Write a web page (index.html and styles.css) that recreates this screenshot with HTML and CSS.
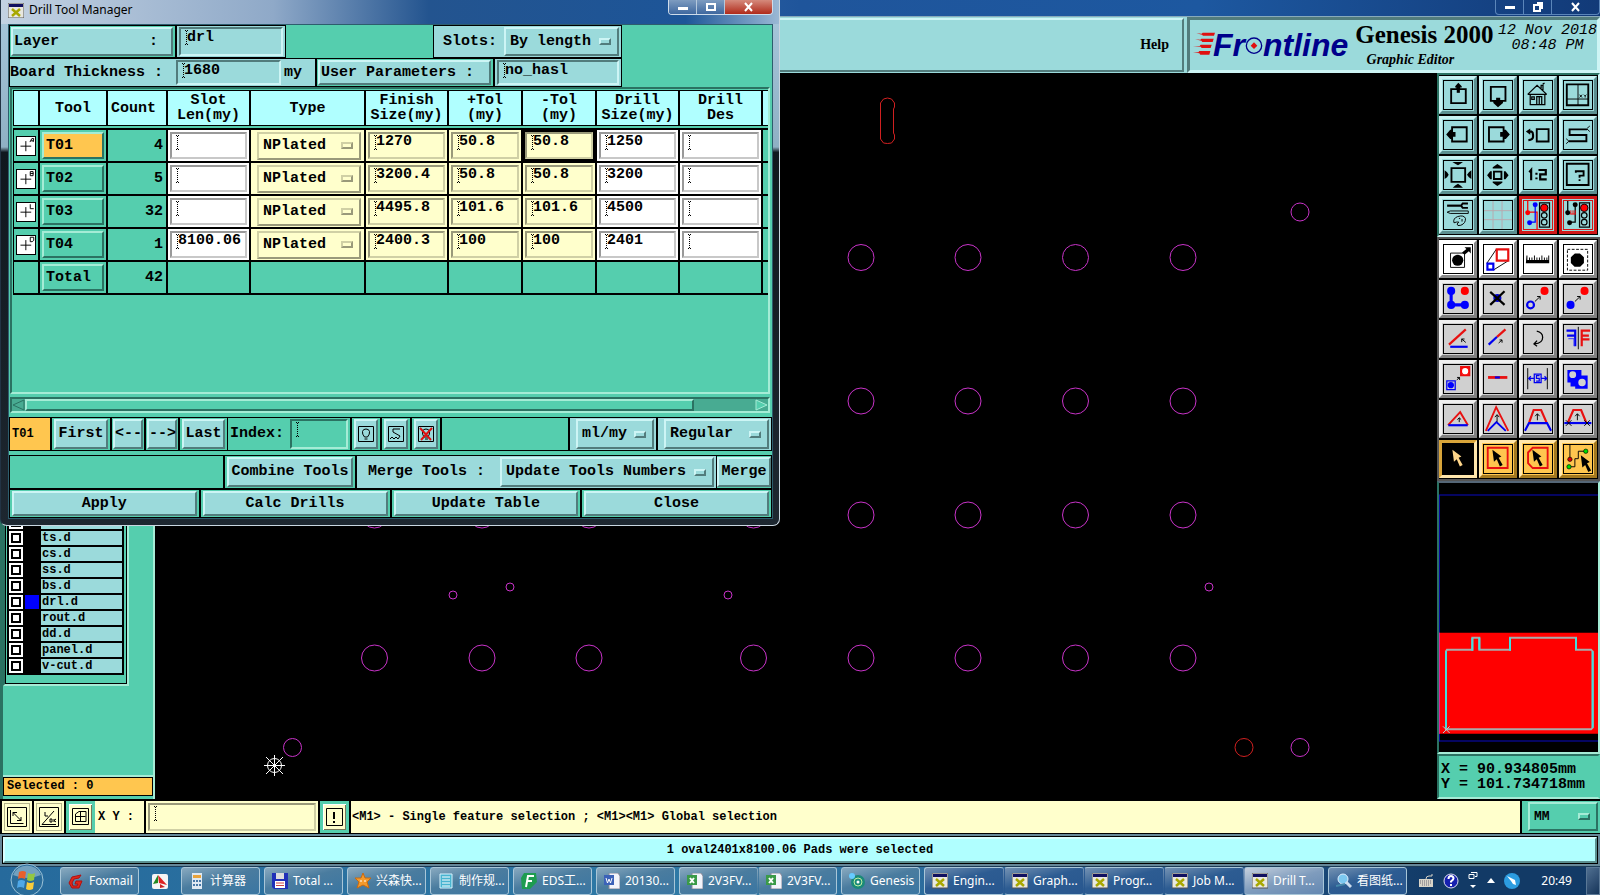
FILE: index.html
```html
<!DOCTYPE html>
<html lang="en">
<head>
<meta charset="utf-8">
<title>Genesis 2000 - Graphic Editor</title>
<link rel="stylesheet" href="styles.css">
</head>
<body>
<svg class="defs" aria-hidden="true">
  <defs>
    <path id="pointer" d="M27 15 L56 37 L47 41 L60 64 L51 69 L41 46 L32 54 Z"/>
    <g id="xwin"><rect width="16" height="15" fill="#e8e8e0" stroke="#555"/><rect x="1" y="1" width="14" height="3" fill="#101060"/><path d="M4 6 L12 13 M12 6 L4 13" stroke="#a8a800" stroke-width="2.5"/></g>
  </defs>
</svg>

<div class="titlebar">
  <div class="winbtns plain">
    <button aria-label="Minimize"><svg width="12" height="10"><rect x="1" y="4" width="10" height="3" fill="#fff"/></svg></button>
    <button aria-label="Restore"><svg width="12" height="10"><path d="M2 3h6v6h-6z M5 1h5v6" fill="none" stroke="#fff" stroke-width="2"/></svg></button>
    <button class="wide" aria-label="Close"><svg width="12" height="10"><path d="M2 1l7 8M9 1l-7 8" stroke="#fff" stroke-width="2"/></svg></button>
  </div>
</div>

<header class="header">
  <nav class="menubar"><button class="help">Help</button></nav>
  <div class="brand">
    <div class="logo">
      <svg class="streaks" width="22" height="26" viewBox="0 0 66 78"><g fill="#e01010"><path d="M10 4l16 1l3-3h37l-3 9H30l-3-3z"/><path d="M6 22l16 1l3-3h37l-3 10H28l-3-4z"/><path d="M0 42l20 0l3-4h33l-3 10H26l-3-4z"/><path d="M0 61l16 0l3-4h33l-3 11H22l-3-4z"/></g></svg>
      <span>Fr</span><svg class="dot" width="18" height="20" viewBox="0 0 54 60"><circle cx="27" cy="32" r="23" fill="none" stroke="#00008b" stroke-width="4"/><path d="M27 22l10 10-10 10-10-10z" fill="#e01010"/></svg><span>ntline</span>
    </div>
    <div class="product"><strong>Genesis 2000</strong><em>Graphic Editor</em></div>
    <div class="clock">12 Nov 2018<br>08:48 PM</div>
  </div>
</header>

<main class="main">
  <aside class="layers">
    <div class="layerbox">
      <ul class="layerlist">
        <li><input type="checkbox" aria-label="layer"><i></i><span></span></li>
        <li><input type="checkbox" id="l1"><i></i><label for="l1">ts.d</label></li>
        <li><input type="checkbox" id="l2"><i></i><label for="l2">cs.d</label></li>
        <li><input type="checkbox" id="l3"><i></i><label for="l3">ss.d</label></li>
        <li><input type="checkbox" id="l4"><i></i><label for="l4">bs.d</label></li>
        <li><input type="checkbox" id="l5"><i class="blue"></i><label for="l5">drl.d</label></li>
        <li><input type="checkbox" id="l6"><i></i><label for="l6">rout.d</label></li>
        <li><input type="checkbox" id="l7"><i></i><label for="l7">dd.d</label></li>
        <li><input type="checkbox" id="l8"><i></i><label for="l8">panel.d</label></li>
        <li><input type="checkbox" id="l9"><i></i><label for="l9">v-cut.d</label></li>
      </ul>
    </div>
    <div class="selected">Selected : 0</div>
  </aside>

  <div class="canvas">
    <svg viewBox="155 73 1282 726" preserveAspectRatio="xMinYMin slice" fill="none" stroke="#c833c8">
      <g>
        <circle cx="861" cy="257.500" r="13"/><circle cx="968" cy="257.500" r="13"/><circle cx="1075.500" cy="257.500" r="13"/><circle cx="1183" cy="257.500" r="13"/>
        <circle cx="861" cy="401" r="13"/><circle cx="968" cy="401" r="13"/><circle cx="1075.500" cy="401" r="13"/><circle cx="1183" cy="401" r="13"/>
        <circle cx="374.500" cy="515" r="13"/><circle cx="482" cy="515" r="13"/><circle cx="589" cy="515" r="13"/><circle cx="753.500" cy="515" r="13"/>
        <circle cx="861" cy="515" r="13"/><circle cx="968" cy="515" r="13"/><circle cx="1075.500" cy="515" r="13"/><circle cx="1183" cy="515" r="13"/>
        <circle cx="374.500" cy="658" r="13"/><circle cx="482" cy="658" r="13"/><circle cx="589" cy="658" r="13"/><circle cx="753.500" cy="658" r="13"/>
        <circle cx="861" cy="658" r="13"/><circle cx="968" cy="658" r="13"/><circle cx="1075.500" cy="658" r="13"/><circle cx="1183" cy="658" r="13"/>
        <circle cx="453" cy="595" r="4"/><circle cx="510" cy="587" r="4"/><circle cx="728" cy="595" r="4"/><circle cx="1209" cy="587" r="4"/>
        <circle cx="1300" cy="212" r="9"/><circle cx="1300" cy="747.500" r="9"/><circle cx="292.500" cy="747.500" r="9"/>
      </g>
      <g stroke="#d02020"><circle cx="1244" cy="747.500" r="9"/><path d="M880.5 103l3-4q4-2 8 0l3 4v4l-1 2v24l1 2v4l-3 4q-4 1-8 0l-3-4z"/></g>
      <g stroke="#fff"><circle cx="274.500" cy="765.500" r="7"/><path d="M264 765.500h21M274.500 755v21M266 757l17 17M283 757l-17 17"/></g>
    </svg>
  </div>

  <aside class="tools">
    <div class="toolbox">
      <button class="t" aria-label="Pan up"><svg viewBox="0 0 90 90"><path class="k5" d="M23 26H70V71H23Z"/><path d="M46 6L36 17V21H40V26H36V28H56V26H52V21H57V17Z"/><path d="M41 18h10v20h-10z"/></svg></button>
      <button class="t" aria-label="Pan down"><svg viewBox="0 0 90 90"><path class="k5" d="M22 19H69V64H22Z"/><path d="M45 84L30 71V64H39V54H52V64H61V71Z"/></svg></button>
      <button class="t" aria-label="Home"><svg viewBox="0 0 90 90"><path class="k4" d="M12 43L42 14L73 43M20 43V76H67V43M12 43H73M41 76V50H57V76M49 50V76M25 51H33V59H25ZM55 24V14H61V30M60 10l6-3"/></svg></button>
      <button class="t" aria-label="Zoom window"><svg viewBox="0 0 90 90"><path class="k5" d="M9 11H78V78H9Z"/><path class="k3" d="M45 11V78M9 58H78M50 44l8 9M58 44l-8 9M64 44l4 4l4-4M68 48v5"/></svg></button>

      <button class="t" aria-label="Pan left"><svg viewBox="0 0 90 90"><path class="k5" d="M26 20H73V66H26Z"/><path d="M7 43L20 28H28V35H37V51H28V58H20Z"/></svg></button>
      <button class="t" aria-label="Pan right"><svg viewBox="0 0 90 90"><path class="k5" d="M16 20H63V66H16Z"/><path d="M83 43L70 28H62V35H52V51H62V58H70Z"/></svg></button>
      <button class="t" aria-label="Previous view"><svg viewBox="0 0 90 90"><path class="k5" d="M41 26H79V66H41Z"/><path class="k6" d="M14 34H24Q29 36 29 44V52Q28 60 14 62"/><path d="M6 34L20 24V44Z"/></svg></button>
      <button class="t" aria-label="Snake"><svg viewBox="0 0 90 90"><path class="k5" d="M74 27H18V45H72V65H16"/><path class="k3" d="M74 24l9-8M74 26l9 8M16 65l-9-8M16 65l-9 8"/></svg></button>

      <button class="t" aria-label="Zoom in"><svg viewBox="0 0 90 90"><path class="k5" d="M24 23H68V67H24Z"/><path d="M27 3H61L53 9L45 14L36 9ZM28 86H61L53 79L45 73L36 79ZM2 30V58L10 52L15 44L10 36ZM88 30V58L80 52L74 44L80 36Z"/></svg></button>
      <button class="t" aria-label="Zoom out"><svg viewBox="0 0 90 90"><path class="k5" d="M32 34H56V58H32Z"/><path d="M43 10L28 20V24H59V20ZM43 80L28 70V66H59V70ZM10 46L20 33H25V59H20ZM79 46L69 33H64V59H69Z"/></svg></button>
      <button class="t" aria-label="Scale one to two"><svg viewBox="0 0 90 90"><path class="k6" d="M17 36L23 29V62M40 38V44M40 53V59M50 32V29H70V43H52V59H73"/></svg></button>
      <button class="t" aria-label="Query"><svg viewBox="0 0 90 90"><path class="k5" d="M9 9H79V77H9Z"/><path class="k5" d="M38 38V33H63V47H50V54M50 59V64"/></svg></button>

      <button class="t" aria-label="Settings"><svg viewBox="0 0 90 90"><path class="k6" d="M10 15H54"/><path class="k5" d="M77 8H60L55 15L60 22H77"/><path class="k3" d="M10 36L20 32H78V40H20ZM32 70Q28 56 44 50Q64 44 69 56Q70 72 54 78Q42 82 42 74L48 68Q42 66 32 70ZM48 56h4M58 58v8"/></svg></button>
      <button class="t" aria-label="Grid"><svg viewBox="0 0 90 90"><path d="M29 0V90M58 0V90M0 31H90M0 60H90" fill="none" stroke="#b9a7ac" stroke-width="3"/></svg></button>
      <button class="t red" aria-label="Online check"><svg viewBox="0 0 90 90"><path d="M12 0V36H42V90" fill="none" stroke="#f00" stroke-width="4"/><path d="M36 10V68H18" fill="none" stroke="#00f" stroke-width="4"/><circle cx="12" cy="38" r="8" fill="#f00"/><circle cx="36" cy="12" r="8" fill="#00f"/><circle cx="18" cy="70" r="8" fill="#00f"/><path class="k4" d="M50 6H82V84H50Z"/><circle cx="65" cy="22" r="12" fill="#f00" stroke="#000" stroke-width="3"/><circle class="k4" cx="65" cy="46" r="9"/><circle class="k4" cx="65" cy="68" r="9"/></svg></button>
      <button class="t red" aria-label="Online check off"><svg viewBox="0 0 90 90"><path class="k4" d="M12 0V38H20M36 10V68H18"/><path d="M20 42H38M22 30V42M29 30V42M36 30V42" fill="none" stroke="#f00" stroke-width="3"/><circle cx="12" cy="38" r="8"/><circle cx="36" cy="12" r="8"/><circle cx="18" cy="70" r="8"/><path class="k4" d="M50 6H82V84H50Z"/><circle cx="65" cy="22" r="12" fill="#f00" stroke="#000" stroke-width="3"/><circle class="k4" cx="65" cy="46" r="9"/><circle class="k4" cx="65" cy="68" r="9"/></svg></button>
    </div>

    <div class="toolbox gray">
      <button class="t white" aria-label="Pad select"><svg viewBox="0 0 90 90"><path class="k3" d="M21 26H66V72H21Z"/><circle cx="44" cy="49" r="18"/><path d="M58 24L72 13L66 7H86V27L80 20L66 31Z"/></svg></button>
      <button class="t white" aria-label="Resize"><svg viewBox="0 0 90 90"><path class="k3" d="M9 59L40 13M31 80L79 50"/><path class="r6" d="M41 14H78V50H41Z"/><path class="b6" d="M11 60H30V79H11Z"/></svg></button>
      <button class="t white" aria-label="Measure"><svg viewBox="0 0 90 90"><path d="M8 34h3v14h5v-8h3v8h5v-8h3v8h5v-14h3v14h5v-8h3v8h5v-8h3v8h5v-14h3v14h5v-8h3v8h5v-8h3v8h3v-14h3v25h-75z"/></svg></button>
      <button class="t white" aria-label="Area select"><svg viewBox="0 0 90 90"><path class="k3" stroke-dasharray="9 5" d="M11 14H76V81H11Z"/><path d="M35 27H51L64 39V58L52 70H34L22 58V39Z"/></svg></button>

      <button class="t" aria-label="Move"><svg viewBox="0 0 90 90"><path d="M23 19V64H66" fill="none" stroke="#00f" stroke-width="10"/><g fill="#00f"><circle cx="23" cy="19" r="13"/><circle cx="23" cy="64" r="13"/><circle cx="67" cy="64" r="13"/></g><circle cx="67" cy="19" r="13" fill="#f00"/></svg></button>
      <button class="t" aria-label="Delete"><svg viewBox="0 0 90 90"><circle cx="43" cy="42" r="13" fill="#00c"/><path class="k6" d="M20 22L66 64M66 20L20 64"/></svg></button>
      <button class="t" aria-label="Copy outline"><svg viewBox="0 0 90 90"><circle class="b6" cx="21" cy="64" r="11"/><circle cx="66" cy="19" r="13" fill="#f00"/><path class="k3" d="M35 53L52 37M42 37H52V47"/></svg></button>
      <button class="t" aria-label="Copy"><svg viewBox="0 0 90 90"><circle cx="21" cy="64" r="13" fill="#00f"/><circle cx="66" cy="19" r="13" fill="#f00"/><path class="k3" d="M35 53L52 37M42 37H52V47"/></svg></button>

      <button class="t" aria-label="Rotate"><svg viewBox="0 0 90 90"><path class="r6" d="M16 63L70 14"/><path class="b6" d="M20 70H76"/><path class="k3" d="M70 56L57 45M57 55V45H66"/></svg></button>
      <button class="t" aria-label="Extend"><svg viewBox="0 0 90 90"><path class="b6" d="M15 63L42 38"/><path class="r6" d="M42 38L69 14"/><path class="k3" d="M47 58L58 48M50 48H58V57"/></svg></button>
      <button class="t" aria-label="Turn"><svg viewBox="0 0 90 90"><path class="k4" d="M41 20Q60 24 60 40Q60 58 34 61M42 50L32 61L42 68"/></svg></button>
      <button class="t" aria-label="Mirror"><svg viewBox="0 0 90 90"><path class="k3" d="M46 6V78"/><path class="b6" d="M8 18H36V68M10 34H36"/><path d="M14 44H32V68" fill="none" stroke="#33f" stroke-width="3"/><path class="r6" d="M84 18H57V68M80 34H57M60 46H82"/></svg></button>

      <button class="t" aria-label="Substitute"><svg viewBox="0 0 90 90"><path class="r6" d="M55 7H81V33H55Z"/><circle cx="68" cy="20" r="12" fill="#fff" stroke="#f00" stroke-width="4"/><path class="b4" d="M9 51H36V79H9Z"/><circle cx="22" cy="65" r="10" fill="#00f"/><path class="k3" d="M41 48L50 40M42 40H50V48"/></svg></button>
      <button class="t" aria-label="Break line"><svg viewBox="0 0 90 90"><path class="r6 thick" d="M13 40H75"/><path class="b6" d="M35 40H51"/></svg></button>
      <button class="t" aria-label="Spacing"><svg viewBox="0 0 90 90"><path class="k3" d="M12 10V78M75 10V78"/><path class="b4" d="M33 29H55V57H33ZM33 43H15M22 36L15 43L22 50M55 43H73M66 36L73 43L66 50M50 34H40V43H49V52H39"/></svg></button>
      <button class="t" aria-label="Merge shapes"><svg viewBox="0 0 90 90"><path d="M11 16H56V34H76V76H36V69H21V56H11Z" fill="#00f"/><circle cx="28" cy="31" r="11" fill="#d0d0d0"/><circle cx="58" cy="56" r="12" fill="#d0d0d0"/></svg></button>

      <button class="t" aria-label="Triangle"><svg viewBox="0 0 90 90"><path class="r5" d="M13 65L52 23L77 65"/><path class="b6" d="M14 65H76"/><path class="k3" d="M49 55V42M43 47L49 41L55 47"/></svg></button>
      <button class="t" aria-label="Stretch corner"><svg viewBox="0 0 90 90"><path class="r5" d="M6 83L39 7L78 83"/><path class="b5" d="M12 83L40 55L70 83"/><path class="k3" d="M42 54V32M35 39L42 31L49 39"/></svg></button>
      <button class="t" aria-label="Stretch side"><svg viewBox="0 0 90 90"><path class="r6" d="M17 55L31 16H55L72 55"/><path class="b6" d="M3 83L16 58H74L87 83"/><path class="k3" d="M43 49V29M36 36L43 28L50 36"/></svg></button>
      <button class="t" aria-label="Stretch segment"><svg viewBox="0 0 90 90"><path class="r6" d="M13 55L30 16H55L71 55"/><path class="b6" d="M1 58H88"/><path class="k3" d="M43 49V29M36 36L43 28L50 36M6 49L24 67M24 49L6 67M65 49L83 67M83 49L65 67"/></svg></button>

      <button class="t orange on" aria-label="Select"><svg viewBox="0 0 90 90"><use href="#pointer" fill="#ffd68a"/></svg></button>
      <button class="t orange" aria-label="Frame select"><svg viewBox="0 0 90 90"><path class="r5" d="M12 9H76V74H12Z"/><use href="#pointer"/></svg></button>
      <button class="t orange" aria-label="Polygon select"><svg viewBox="0 0 90 90"><path class="r5" d="M28 9H76V74H28L13 58V24Z"/><use href="#pointer"/></svg></button>
      <button class="t orange" aria-label="Net select"><svg viewBox="0 0 90 90"><path class="k3" d="M19 0V46M16 70H35V44H46V20H70"/><circle cx="19" cy="46" r="7" fill="#d00" stroke="#000" stroke-width="2"/><circle cx="16" cy="70" r="7" fill="#0d0" stroke="#000" stroke-width="2"/><circle cx="70" cy="20" r="7" fill="#0d0" stroke="#000" stroke-width="2"/><use href="#pointer" x="27" y="18"/></svg></button>
    </div>

    <div class="overview">
      <svg viewBox="0 0 480 810" preserveAspectRatio="xMinYMin meet">
        <path d="M0 36H480M1 36V775M0 774H480" fill="none" stroke="#0a0ac0" stroke-width="3"/>
        <path d="M0 449H480V752H0Z" fill="#f00"/><path d="M1 449V752" stroke="#e0209a" stroke-width="4"/>
        <path d="M24 500H100V464H121V500H213V464H411V500H456L461 505V734L456 739H21V505Z" fill="none" stroke="#a9a9a9" stroke-width="6"/>
        <path d="M100 503V464M121 464V500M213 503V464M411 464V500M461 505V734M21 505V734" fill="none" stroke="#40e0e0" stroke-width="6"/>
        <path d="M12 730L32 750M32 730L12 750" stroke="#a9d8d8" stroke-width="3"/>
      </svg>
    </div>
    <div class="coords">X = 90.934805mm<br>Y = 101.734718mm</div>
  </aside>
</main>

<div class="entry">
  <button class="ybtn" aria-label="Absolute"><svg width="20" height="20" viewBox="0 0 20 20"><path d="M.5.5h19v19H.5zM3.500 3v13.500h13M6 5.500l8 8M6 9V5.500h4M14 10v3.500h-4" fill="none" stroke="#000"/></svg></button>
  <button class="ybtn" aria-label="Angle"><svg width="20" height="20" viewBox="0 0 20 20"><path d="M.5.5h19v19H.5zM3 17.500L15 4M3 17.500h14M6 5v4h3M11 12h2v3h-2zM15 12v3M17 12l-2 1.500 2 1.500" fill="none" stroke="#000"/></svg></button>
  <button class="ybtn greencell" aria-label="Grid snap"><svg width="18" height="18" viewBox="0 0 18 18"><path d="M.5.5h16v16H.5zM3.500 6L7 3.500h7v10H3.500zM8.500 3.500v10M3.500 8.500h10" fill="none" stroke="#000"/></svg></button>
  <label class="xylabel" for="xy">X Y :</label>
  <div class="xycell"><input id="xy" class="field yellow" type="text"></div>
  <button class="ybtn greencell" aria-label="Alert"><svg width="17" height="18" viewBox="0 0 17 18"><path d="M.5.5h16v17H.5z" fill="none" stroke="#000"/><path d="M7 4h2v7H7zM7 13h2v2H7z"/></svg></button>
  <div class="hint">&lt;M1&gt; - Single feature selection ; &lt;M1&gt;&lt;M1&gt; Global selection</div>
  <div class="unit"><div class="sel green"><select class="small" aria-label="Units"><option>MM</option></select><i></i></div></div>
</div>

<div class="status"><div>1 oval2401x8100.06 Pads were selected</div></div>

<footer class="taskbar">
  <button class="orb" aria-label="Start"><svg width="34" height="32" viewBox="0 0 34 32"><circle cx="17" cy="17" r="16" fill="#2a6c9a" stroke="#9cc3d8"/><path d="M3 12a15 15 0 0 1 28 0q-14 6-28 0" fill="#a4c5d8" opacity=".6"/><path d="M9 9q4-2 7 0l-1 7q-4-2-7 0z" fill="#e8602c"/><path d="M18 10q4 2 7 0l-1 7q-4 2-7 0z" fill="#93c841"/><path d="M8 18q3-2 7 0l-1 7q-4-2-7 0z" fill="#4fa8e8"/><path d="M17 19q3 2 7 0l-1 7q-4 2-7 0z" fill="#f8cc3c"/></svg></button>
  <button class="task"><svg viewBox="0 0 16 16"><path d="M13 2L4 4L1 10L4 15H11L14 8H8L7 11H10L9 13H5L4 10L6 6L11 5Z" fill="#e02818" stroke="#b01010"/></svg><span>Foxmail</span></button>
  <button class="pin" aria-label="Pinned"><svg width="16" height="15"><rect width="16" height="15" rx="2" fill="#f5f5f5"/><path d="M6 1l9 10-8-2z" fill="#d22"/><path d="M1 10l5-9v8z" fill="#282"/><path d="M8 10l5 3-5 1z" fill="#c22"/></svg></button>
  <button class="task"><svg viewBox="0 0 16 16"><path d="M3 0h10v16H3z" fill="#dfe9f2"/><path d="M4 2h8v3H4z" fill="#e8a33c"/><path d="M4 7h2v2H4zM7 7h2v2H7zM10 7h2v2h-2zM4 11h2v2H4zM7 11h2v2H7zM10 11h2v2h-2z" fill="#4878a8"/></svg><span>计算器</span></button>
  <button class="task"><svg viewBox="0 0 16 16"><path d="M0 0h16v16H2L0 14z" fill="#2030b8"/><path d="M4 0h8v6H4z" fill="#ddd"/><path d="M3 8h10v7H3z" fill="#fff"/><path d="M4 10h8M4 12.500h8" stroke="#c44"/></svg><span>Total ...</span></button>
  <button class="task"><svg viewBox="0 0 16 16"><path d="M8 0l2 5 6 0-4 4 2 6-6-3-6 3 2-6-4-4h6z" fill="#f59a2c" stroke="#c86a10"/><path d="M6 7v2M10 7v2" stroke="#fff"/></svg><span>兴森快...</span></button>
  <button class="task"><svg viewBox="0 0 16 16"><path d="M2 1h12v14H2z" fill="#48b4d0" stroke="#d8f4ff"/><path d="M4 4h8M4 7h8M4 10h8M4 13h8" stroke="#fff"/></svg><span>制作规...</span></button>
  <button class="task"><svg viewBox="0 0 16 16"><path d="M3 0h12l1 9-7 7H1L0 5z" fill="#1e9c50"/><path d="M5 14L7 3h6M6 8h5" fill="none" stroke="#fff" stroke-width="2"/></svg><span>EDS工...</span></button>
  <button class="task"><svg viewBox="0 0 16 16"><path d="M5 0h9l2 3v13H5z" fill="#f2f4fa" stroke="#889"/><path d="M0 2h10v10H0z" fill="#3c62b8"/><path d="M2 5l1.500 5L5 6l1.500 4L8 5" fill="none" stroke="#fff"/></svg><span>20130...</span></button>
  <div class="group">
    <button class="task"><svg viewBox="0 0 16 16"><path d="M5 0h9l2 3v13H5z" fill="#f2f4fa" stroke="#889"/><path d="M0 2h10v10H0z" fill="#3a9a48"/><path d="M3 5l4 5M7 5l-4 5" stroke="#fff" stroke-width="2"/></svg><span>2V3FV...</span></button>
    <button class="task"><svg viewBox="0 0 16 16"><path d="M5 0h9l2 3v13H5z" fill="#f2f4fa" stroke="#889"/><path d="M0 2h10v10H0z" fill="#3a9a48"/><path d="M3 5l4 5M7 5l-4 5" stroke="#fff" stroke-width="2"/></svg><span>2V3FV...</span></button>
  </div>
  <button class="task"><svg viewBox="0 0 16 16"><circle cx="9" cy="9" r="7" fill="#1a8a78"/><circle cx="9" cy="9" r="4" fill="none" stroke="#bff0a0"/><circle cx="9" cy="9" r="1.500" fill="#fff"/><circle cx="3" cy="3" r="3" fill="#6cf"/></svg><span>Genesis</span></button>
  <div class="group deep">
    <button class="task"><svg viewBox="0 0 16 16"><use href="#xwin"/></svg><span>Engin...</span></button>
    <button class="task"><svg viewBox="0 0 16 16"><use href="#xwin"/></svg><span>Graph...</span></button>
    <button class="task"><svg viewBox="0 0 16 16"><use href="#xwin"/></svg><span>Progr...</span></button>
    <button class="task"><svg viewBox="0 0 16 16"><use href="#xwin"/></svg><span>Job M...</span></button>
    <button class="task active"><svg viewBox="0 0 16 16"><use href="#xwin"/></svg><span>Drill T...</span></button>
  </div>
  <button class="task deepone"><svg viewBox="0 0 16 16"><circle cx="7" cy="6" r="5" fill="#7cc8f0" stroke="#def"/><path d="M10 9l5 5" stroke="#cde" stroke-width="3"/><path d="M0 13l9-2" stroke="#48a" stroke-width="2"/></svg><span>看图纸...</span></button>
  <div class="tray">
    <svg width="16" height="16"><path d="M1 6h14v8H1z" fill="#d8d4c8"/><path d="M2 8h12M2 10h12M4 12h8" stroke="#667" stroke-dasharray="1 1"/><path d="M8 6q0-3 3-3h3V1" fill="none" stroke="#d8d4c8"/></svg>
    <svg width="16" height="16"><circle cx="8" cy="8" r="7" fill="#1620b0" stroke="#dde"/><path d="M5.500 6q0-3 2.500-3t2.500 2.500q0 1-2.500 3v1M8 11v2" fill="none" stroke="#fff" stroke-width="2"/></svg>
    <svg width="10" height="20"><path d="M3 1.500h6v4h-2M1 3.500h5v4h-5z" fill="none" stroke="#fff"/><path d="M2 14h6l-3 3z" fill="#fff"/></svg>
    <svg width="8" height="8"><path d="M0 6h8L4 1z" fill="#fff"/></svg>
    <svg width="16" height="16"><circle cx="8" cy="8" r="8" fill="#2c9ce0"/><path d="M3 3l8 4 1 5-3-1-2-3z" fill="#fff"/></svg>
    <time>20:49</time>
  </div>
  <button class="desk" aria-label="Show desktop"></button>
</footer>

<section class="drill">
  <div class="drilltitle">
    <svg width="16" height="15"><use href="#xwin"/></svg><h1>Drill Tool Manager</h1>
    <div class="winbtns">
      <button aria-label="Minimize window"><svg width="12" height="10"><rect x="1" y="5" width="10" height="3" fill="#fff"/></svg></button>
      <button aria-label="Maximize window"><svg width="12" height="10"><rect x="2" y="2" width="8" height="6" fill="none" stroke="#fff" stroke-width="2"/></svg></button>
      <button class="wide close" aria-label="Close window"><svg width="12" height="10"><path d="M2 1l7 8M9 1l-7 8" stroke="#fff" stroke-width="2"/></svg></button>
    </div>
  </div>
  <div class="body">
    <div class="bar first">
      <div class="cell w166"><button class="btn left pre">Layer          :</button></div>
      <div class="cell pale w108"><input class="field" type="text" value="drl" aria-label="Layer"></div>
      <div class="cell grow blank"></div>
      <div class="cell pale slots"><label for="slots">Slots:</label><div class="sel"><select id="slots"><option>By length</option></select><i></i></div></div>
      <div class="cell end blank"></div>
    </div>
    <div class="bar low">
      <div class="cell pale thick"><label for="bt">Board Thickness :</label><input id="bt" class="field" type="text" value="1680"><span>my</span></div>
      <div class="cell w176"><button class="btn left">User Parameters :</button></div>
      <div class="cell pale grow"><input class="field" type="text" value="no_hasl" aria-label="User parameters"></div>
      <div class="cell end blank"></div>
    </div>

    <div class="tablebox">
      <table>
        <colgroup><col class="c1"><col class="c2"><col class="c3"><col class="c4"><col class="c5"><col class="c4"><col class="c6"><col class="c6"><col class="c4"><col class="c4"><col></colgroup>
        <thead><tr><th></th><th>Tool</th><th class="count">Count</th><th>Slot<br>Len(my)</th><th>Type</th><th>Finish<br>Size(my)</th><th>+Tol<br>(my)</th><th>-Tol<br>(my)</th><th>Drill<br>Size(my)</th><th>Drill<br>Des</th><th></th></tr></thead>
        <tbody>
          <tr>
            <td><svg class="sym" viewBox="0 0 57 57"><path d="M11 29H45M28 13V45M41 16L47 5H53L51 16M44 12H52"/></svg></td>
            <td><button class="tool cur">T01</button></td><td class="num">4</td>
            <td class="w"><input class="field" aria-label="T01 slot length"></td>
            <td class="y"><div class="sel yel"><select aria-label="T01 type"><option>NPlated</option></select><i></i></div></td>
            <td class="y"><input class="field" value="1270" aria-label="T01 finish"></td>
            <td class="y"><input class="field" value="50.8" aria-label="T01 plus tol"></td>
            <td class="y focus"><input class="field" value="50.8" aria-label="T01 minus tol"></td>
            <td class="w"><input class="field" value="1250" aria-label="T01 drill size"></td>
            <td class="w"><input class="field" aria-label="T01 designator"></td><td></td>
          </tr>
          <tr>
            <td><svg class="sym" viewBox="0 0 57 57"><path d="M11 29H45M28 13V45M42 5V18H51V5ZM42 11H52"/></svg></td>
            <td><button class="tool">T02</button></td><td class="num">5</td>
            <td class="w"><input class="field" aria-label="T02 slot length"></td>
            <td class="y"><div class="sel yel"><select aria-label="T02 type"><option>NPlated</option></select><i></i></div></td>
            <td class="y"><input class="field" value="3200.4" aria-label="T02 finish"></td>
            <td class="y"><input class="field" value="50.8" aria-label="T02 plus tol"></td>
            <td class="y"><input class="field" value="50.8" aria-label="T02 minus tol"></td>
            <td class="w"><input class="field" value="3200" aria-label="T02 drill size"></td>
            <td class="w"><input class="field" aria-label="T02 designator"></td><td></td>
          </tr>
          <tr>
            <td><svg class="sym" viewBox="0 0 57 57"><path d="M11 29H45M28 13V45M53 18H42V4"/></svg></td>
            <td><button class="tool">T03</button></td><td class="num">32</td>
            <td class="w"><input class="field" aria-label="T03 slot length"></td>
            <td class="y"><div class="sel yel"><select aria-label="T03 type"><option>NPlated</option></select><i></i></div></td>
            <td class="y"><input class="field" value="4495.8" aria-label="T03 finish"></td>
            <td class="y"><input class="field" value="101.6" aria-label="T03 plus tol"></td>
            <td class="y"><input class="field" value="101.6" aria-label="T03 minus tol"></td>
            <td class="w"><input class="field" value="4500" aria-label="T03 drill size"></td>
            <td class="w"><input class="field" aria-label="T03 designator"></td><td></td>
          </tr>
          <tr>
            <td><svg class="sym" viewBox="0 0 57 57"><path d="M11 29H45M28 13V45M42 4V18H48L53 14V4Z"/></svg></td>
            <td><button class="tool">T04</button></td><td class="num">1</td>
            <td class="w"><input class="field" value="8100.06" aria-label="T04 slot length"></td>
            <td class="y"><div class="sel yel"><select aria-label="T04 type"><option>NPlated</option></select><i></i></div></td>
            <td class="y"><input class="field" value="2400.3" aria-label="T04 finish"></td>
            <td class="y"><input class="field" value="100" aria-label="T04 plus tol"></td>
            <td class="y"><input class="field" value="100" aria-label="T04 minus tol"></td>
            <td class="w"><input class="field" value="2401" aria-label="T04 drill size"></td>
            <td class="w"><input class="field" aria-label="T04 designator"></td><td></td>
          </tr>
          <tr><td></td><td><button class="tool">Total</button></td><td class="num">42</td><td></td><td></td><td></td><td></td><td></td><td></td><td></td><td></td></tr>
        </tbody>
      </table>
    </div>

    <div class="scroll"><svg width="13" height="12"><path d="M12 1L1 6L12 11Z" fill="#48ab92" stroke="#2b7262"/></svg><div class="thumb"></div><svg width="13" height="12"><path d="M1 1L12 6L1 11Z" fill="#55ceae" stroke="#a5ecd6"/></svg></div>

    <div class="bar nav">
      <div class="cell tag">T01</div>
      <div class="cell"><button class="btn w54">First</button></div>
      <div class="cell"><button class="btn w30">&lt;--</button></div>
      <div class="cell"><button class="btn w30">--&gt;</button></div>
      <div class="cell"><button class="btn w44">Last</button></div>
      <div class="cell index"><label for="ix">Index:</label><input id="ix" class="field greenf" type="text"></div>
      <div class="cell"><button class="btn icon" aria-label="Highlight"><svg width="16" height="16"><path d="M.5.5h15v15H.5zM6.500 11Q4 8 4.500 5.500Q5 3 8 3T11.500 5.500Q12 8 9.500 11zM6.500 13h3" fill="none" stroke="#000"/></svg></button></div>
      <div class="cell"><button class="btn icon" aria-label="Route"><svg width="16" height="16"><path d="M.5.5h15v15H.5zM12 3H5v3l7 4-2 3-2-2-2 2-2-2-2 2" fill="none" stroke="#000"/></svg></button></div>
      <div class="cell"><button class="btn icon" aria-label="Clear highlight"><svg width="16" height="16"><path d="M.5.5h15v15H.5zM6 11Q4 8 4.500 5.500T8 3T11.500 5.500T10 11zM7 13h3" fill="none" stroke="#000"/><path d="M2 2l11 12M14 2L3 14" stroke="#d11" stroke-width="2"/></svg></button></div>
      <div class="cell grow"></div>
      <div class="cell pale unitsel"><div class="sel"><select aria-label="Display units"><option>ml/my</option></select><i></i></div></div>
      <div class="cell pale regsel"><div class="sel"><select aria-label="Mode"><option>Regular</option></select><i></i></div></div>
    </div>

    <div class="bar">
      <div class="cell grow"></div>
      <div class="cell"><button class="btn w126">Combine Tools</button></div>
      <div class="cell pale merge"><label for="mt">Merge Tools :</label><div class="sel"><select id="mt"><option>Update Tools Numbers</option></select><i></i></div></div>
      <div class="cell snug"><button class="btn w54">Merge</button></div>
    </div>
    <div class="bar low actions">
      <div class="cell"><button class="btn">Apply</button></div>
      <div class="cell"><button class="btn">Calc Drills</button></div>
      <div class="cell"><button class="btn">Update Table</button></div>
      <div class="cell"><button class="btn">Close</button></div>
    </div>
  </div>
</section>
</body>
</html>
```
FILE: styles.css
```css
:root {
  --green: #55ceae;
  --green-hi: #a5ecd6;
  --green-lo: #2b7262;
  --pale: #9bdadb;
  --pale-hi: #cdf5f5;
  --pale-lo: #527c7c;
  --cyan: #b0ffff;
  --yellow: #ffffcc;
  --orange: #ffc64f;
  --mono: "Liberation Mono", "DejaVu Sans Mono", monospace;
  --serif: "Liberation Serif", serif;
  --ui: "Noto Sans", "Noto Sans CJK SC", sans-serif;
}

* { box-sizing: border-box; }

body {
  margin: 0;
  height: 100vh;
  display: flex;
  flex-direction: column;
  overflow: hidden;
  background: #000;
  color: #000;
  font: bold 15px/16px var(--mono);
}

button, input, select {
  font: inherit;
  color: inherit;
  margin: 0;
  padding: 0;
  border-radius: 0;
}
button { border: 0; background: none; }
.defs { display: none; }

/* main window title */
.titlebar {
  height: 17px;
  flex: none;
  display: flex;
  justify-content: flex-end;
  background: linear-gradient(90deg, #7d9fc4, #1f559b 50%, #1d58a0 75%, #123a78);
  border-bottom: 1px solid #8ab;
}
.winbtns {
  display: flex;
  height: 15px;
  margin-left: auto;
  border: 1px solid #cfdcea;
  border-top: 0;
  border-radius: 0 0 4px 4px;
  overflow: hidden;
}
.winbtns button {
  width: 28px;
  display: flex;
  align-items: center;
  justify-content: center;
  border-right: 1px solid #b5c8dc;
  background: linear-gradient(#7e9cc0, #3f689f);
}
.winbtns .wide { width: 47px; border-right: 0; }
.winbtns .close { background: linear-gradient(#d58a7c, #b02a1a); }
.winbtns.plain { border-color: #5b86ba; }
.winbtns.plain button { background: none; border-color: #5b86ba; }

/* header */
.header { flex: none; height: 56px; display: flex; background: var(--pale); }
.menubar {
  flex: 1;
  display: flex;
  justify-content: flex-end;
  align-items: center;
  border: 2px solid;
  border-color: var(--pale-hi) var(--pale-lo) var(--pale-lo) var(--pale-hi);
  margin: 1px 3px 1px 0;
}
.help { font: bold 14px/16px var(--serif); padding: 0 13px; }
.brand {
  width: 413px;
  display: flex;
  align-items: flex-start;
  border: 3px solid;
  border-color: var(--pale-lo) var(--pale-hi) var(--pale-hi) var(--pale-lo);
}
.logo {
  display: flex;
  align-items: center;
  padding-top: 7px;
  padding-left: 3px;
  font: italic bold 32px/36px "Liberation Sans", Arial, sans-serif;
  color: #00008b;
}
.streaks { margin-right: -2px; }
.product { display: flex; flex-direction: column; align-items: center; padding: 1px 0 0 8px; width: 144px; }
.product strong { font: bold 25px/27px var(--serif); white-space: nowrap; }
.product em { font: italic bold 14px/24px var(--serif); padding-right: 28px; white-space: nowrap; }
.clock { font-style: italic; font-weight: normal; text-align: center; padding-top: 3px; margin-left: auto; line-height: 15px; white-space: nowrap; }

/* body */
.main { flex: 1; min-height: 0; display: flex; }
.layers {
  width: 155px;
  display: flex;
  flex-direction: column;
  background: var(--green);
  border-left: 3px solid var(--green-lo);
  border-right: 2px solid var(--green-hi);
}
.layerbox {
  flex: 1;
  display: flex;
  flex-direction: column;
  justify-content: flex-end;
  width: 126px;
  margin-bottom: 91px;
  padding: 0 3px 9px 2px;
  border: 2px solid var(--green-hi);
  border-left-color: var(--green-lo);
  outline: 1px solid #000;
  outline-offset: -3px;
}
.layerlist { list-style: none; margin: 0; padding: 2px 2px 0; background: #000; font-size: 12px; line-height: 14px; }
.layerlist li { display: flex; gap: 2px; height: 16px; padding-bottom: 2px; }
.layerlist input {
  appearance: none;
  width: 14px;
  height: 14px;
  background: #fff;
  border: 2px solid #fff;
  box-shadow: inset 0 0 0 2px #000;
}
.layerlist i { width: 14px; }
.layerlist .blue { background: #00f; }
.layerlist label, .layerlist span { flex: 1; background: var(--pale); padding-left: 1px; }
.selected {
  margin: 0 0 3px;
  padding: 0 3px;
  border: 1px solid #000;
  background: var(--orange);
  font-size: 12px;
  line-height: 17px;
  box-shadow: 0 -2px 0 var(--green-hi);
}
.canvas { flex: 1; min-width: 0; background: #000; }
.canvas svg { display: block; width: 100%; height: 100%; }

/* tool palette */
.tools { width: 163px; display: flex; flex-direction: column; background: #000; }
.toolbox {
  display: grid;
  grid-template-columns: repeat(4, 38px);
  gap: 2px;
  padding: 1px 0;
  border: 2px solid;
  border-color: var(--green-lo) var(--pale-hi) var(--pale-hi) var(--green-lo);
}
.toolbox.gray { border-color: #555; }
.t {
  height: 38px;
  display: flex;
  align-items: center;
  justify-content: center;
  background: var(--pale);
  border: 3px solid;
  border-color: #c8f2f2 #5b8f90 #5b8f90 #c8f2f2;
}
.t svg { width: 30px; height: 30px; border: 1px solid #000; }
.gray .t { background: #d0d0d0; border-color: #f0f0f0 #808080 #808080 #f0f0f0; }
.gray .white { background: #fff; border-color: #fff #888 #888 #fff; }
.gray .orange { background: var(--orange); border-color: #ffe6ac #a37820 #a37820 #ffe6ac; }
.gray .on { background: #000; border-color: #d9a53a #ffe6ac #ffe6ac #d9a53a; }
.t.red { border-color: #d01818; }
.t.red svg { border-color: #d01818; }
.k3, .k4, .k5, .k6, .r5, .r6, .b4, .b5, .b6 { fill: none; stroke: #000; stroke-width: 6; }
.k3 { stroke-width: 3; }
.k4, .b4 { stroke-width: 4; }
.k6, .r6, .b6 { stroke-width: 7; }
.r5, .r6 { stroke: #e81010; }
.b4, .b5, .b6 { stroke: #0000f0; }
.thick { stroke-width: 9; }
.overview {
  flex: 1;
  min-height: 0;
  overflow: hidden;
  border: 2px solid;
  border-color: #567 var(--green-hi) var(--green-hi) var(--green-lo);
}
.overview svg { display: block; width: 160px; height: 270px; }
.coords {
  padding: 6px 2px 5px 2px;
  background: var(--green);
  border: 2px solid;
  border-color: var(--green-lo) var(--green) var(--green-hi) var(--green-lo);
  line-height: 15px;
}

/* coordinate entry */
.entry { flex: none; height: 35px; display: flex; gap: 2px; padding: 2px 0 1px 2px; background: #000; }
.ybtn {
  width: 30px;
  display: flex;
  align-items: center;
  justify-content: center;
  background: var(--yellow);
  border: 2px solid var(--yellow);
  box-shadow: inset 0 0 0 1px #b5b58c;
}
.ybtn.greencell { width: 29px; border: 3px solid var(--green); box-shadow: inset 1px 1px 0 #fff, inset -1px -1px 0 #77775c; }
.xylabel { width: 49px; display: flex; align-items: center; padding-left: 3px; background: var(--yellow); font-size: 12px; margin-left: -2px; }
.xycell { display: flex; width: 172px; padding: 2px; background: var(--yellow); }
.hint { flex: 1; display: flex; align-items: center; padding-left: 1px; background: var(--yellow); font-size: 12px; white-space: nowrap; }
.unit { display: flex; width: 78px; padding: 1px 2px 2px 6px; background: var(--green); }
.unit .sel { flex: 1; }
.small { font-size: 13px; }
.status {
  flex: none;
  height: 32px;
  padding: 1px;
  border: 2px solid #689;
  background: #000;
}
.status div {
  height: 100%;
  display: flex;
  align-items: center;
  justify-content: center;
  background: var(--cyan);
  border: 2px solid;
  border-color: #d8ffff #5b8f90 #5b8f90 #d8ffff;
  font-size: 12px;
}

/* task bar */
.taskbar {
  flex: none;
  height: 29px;
  display: flex;
  align-items: stretch;
  gap: 4px;
  padding-left: 10px;
  background: linear-gradient(90deg, #266a9c, #2f7aa6 45%, #285f94 70%, #123a66 90%);
  color: #fff;
  font: 12px/26px var(--ui);
  border-top: 1px solid #1c3c58;
}
.orb { width: 46px; display: flex; margin-top: -4px; }
.task {
  width: 79px;
  display: flex;
  align-items: center;
  gap: 5px;
  padding-left: 7px;
  border: 1px solid #a8c6d8;
  border-radius: 3px;
  background: linear-gradient(165deg, #88a9bf, #4a7c9f 45%, #3a76a2);
  white-space: nowrap;
  overflow: hidden;
}
.task svg { width: 16px; height: 16px; flex: none; }
.pin { width: 34px; display: flex; align-items: center; justify-content: center; }
.group { display: flex; }
.group .task { width: 80px; }
.group:not(.deep) .task { width: 79px; }
.deep .task, .deepone { background: linear-gradient(165deg, #7391b2, #2d5c92 45%, #28578f); }
.group .task:not(:first-child) { border-left-color: transparent; }
.group .task:not(:last-child) { border-right-color: transparent; }
.deep .active { background: linear-gradient(165deg, #c5d0de, #7f9cbd 50%, #6488b2); }
.tray { flex: 1; display: flex; align-items: center; justify-content: flex-end; gap: 9px; padding-right: 10px; }
.tray time { margin-left: 12px; }
.desk { width: 14px; border: 1px solid #5a7896; background: linear-gradient(135deg, #4f6f91, #16355a); }

/* drill tool window */
.drill {
  position: absolute;
  left: 0;
  top: 0;
  width: 780px;
  padding: 0 6px 6px 7px;
  border: 1px solid #c9d6e0;
  border-top: 0;
  border-left-color: #234;
  border-radius: 0 0 7px 7px;
  background: linear-gradient(#a9c8dc, #8fb0c4 28%, #10181e 29%, #1d2730);
}
.drilltitle {
  display: flex;
  align-items: center;
  height: 24px;
  gap: 5px;
  margin: 0 -6px 0 -7px;
  padding: 0 6px 4px 7px;
  background: linear-gradient(90deg, #c3d2e2, #8fa9c8 35%, #23548f 55%, #1d5598 88%, #9ab8d4);
}
.drilltitle h1 { margin: 0; font: 12px/18px var(--ui); }
.drilltitle .winbtns { align-self: flex-start; }
.body { background: var(--green); border: 1px solid #2d5d6d; }

.bar { display: flex; gap: 2px; min-height: 34px; padding: 1px; background: #000; }
.bar.first { min-height: 33px; }
.bar.low { min-height: 29px; }
.cell { display: flex; align-items: stretch; padding: 1px 2px; background: var(--green); }
.pale { background: var(--pale); }
.grow { flex: 1; }
.end { width: 150px; }
.blank { margin: -1px; }
.w166 { width: 165px; }
.w108 { width: 108px; }
.w176 { width: 176px; }
.btn {
  flex: 1;
  background: var(--pale);
  border: 2px solid;
  border-color: var(--pale-hi) var(--pale-lo) var(--pale-lo) var(--pale-hi);
  white-space: nowrap;
}
.left { text-align: left; padding-left: 1px; }
.pre { white-space: pre; }
.w166, .w176 { padding-left: 1px; }
.field {
  flex: 1;
  min-width: 0;
  width: 100%;
  padding: 0 0 8px 6px;
  border: 2px solid;
  border-color: var(--pale-lo) var(--pale-hi) var(--pale-hi) var(--pale-lo);
  background:
    repeating-linear-gradient(#000 0 1px, transparent 1px 2px) 5px 2px / 1px 13px no-repeat,
    repeating-linear-gradient(90deg, #000 0 1px, transparent 1px 2px) 4px 1px / 3px 1px no-repeat,
    repeating-linear-gradient(90deg, #000 0 1px, transparent 1px 2px) 4px 15px / 3px 1px no-repeat;
  outline: 0;
}
.first .field { padding-bottom: 7px; }
.low .field { padding-bottom: 4px; }
.yellow { border-color: #99997a #d0d0a5 #d0d0a5 #99997a; }
.greenf { border-color: var(--green-lo) var(--green-hi) var(--green-hi) var(--green-lo); }
.sel {
  display: flex;
  align-items: center;
  padding: 0 6px 0 4px;
  border: 2px solid;
  border-color: var(--pale-hi) var(--pale-lo) var(--pale-lo) var(--pale-hi);
}
.sel select { flex: 1; min-width: 0; appearance: none; border: 0; background: none; outline: 0; }
.sel i {
  width: 12px;
  height: 7px;
  border: 2px solid;
  border-color: var(--pale-hi) var(--pale-lo) var(--pale-lo) var(--pale-hi);
}
.sel.green, .sel.green i { border-color: var(--green-hi) var(--green-lo) var(--green-lo) var(--green-hi); }
.sel.yel, .sel.yel i { border-color: #d0d0a5 #99997a #99997a #d0d0a5; }

.slots { width: 187px; padding-left: 9px; justify-content: space-between; }
.slots label, .thick label, .thick span, .index label, .merge label { align-self: center; white-space: nowrap; }
.slots .sel { width: 115px; }
.thick { width: 305px; padding-left: 0; }
.thick .field { flex: none; width: 105px; margin-left: 13px; }
.thick span { margin-left: 3px; }

.tablebox {
  height: 307px;
  margin: 0 2px 0 1px;
  padding: 1px 0 0 1px;
  border: 2px solid;
  border-color: var(--green-lo) var(--green-hi) var(--green-hi) var(--green-lo);
  overflow: hidden;
}
table { table-layout: fixed; width: 100%; border-spacing: 0; }
.c1 { width: 27px; }
.c2 { width: 68px; }
.c3 { width: 60px; }
.c4 { width: 83px; }
.c5 { width: 115px; }
.c6 { width: 74px; }
th, td { padding: 0; border-right: 2px solid #000; }
th:last-child, td:last-child { border-right: 0; }
th {
  height: 36px;
  background: var(--cyan);
  border-top: 1px solid #000;
  border-bottom: 1px solid #000;
  line-height: 15px;
  font-weight: bold;
}
th.count { text-align: left; padding-left: 3px; }
tbody::before { content: ""; display: block; height: 2px; }
td { height: 33px; border-bottom: 2px solid #000; vertical-align: middle; }
tbody tr:first-child td { height: 35px; border-top: 2px solid #000; }
th:first-child, td:first-child { border-left: 1px solid #000; }
td .field { display: block; height: 27px; width: calc(100% - 4px); margin: 0 auto; border-color: #999 #c8c8c8 #c8c8c8 #999; }
td .sel { height: 28px; margin: 0 3px 0 6px; }
td.w { background: #fff; }
td.y { background: var(--yellow); }
td.y .field { border-color: #99997a #d0d0a5 #d0d0a5 #99997a; }
td.focus { box-shadow: inset 0 0 0 2px #000; }
.num { text-align: right; padding-right: 3px; }
.sym { display: block; width: 20px; height: 20px; margin: 0 auto; background: #fff; border: 1px solid #000; fill: none; stroke: #000; stroke-width: 3; }
.tool {
  display: block;
  width: 62px;
  height: 27px;
  margin: 0 auto;
  padding-left: 2px;
  text-align: left;
  border: 2px solid;
  border-color: var(--green-hi) var(--green-lo) var(--green-lo) var(--green-hi);
}
.cur { background: var(--orange); }

.scroll {
  display: flex;
  align-items: center;
  height: 16px;
  margin: 3px 2px 4px 1px;
  border: 2px solid;
  border-color: var(--green-lo) var(--green-hi) var(--green-hi) var(--green-lo);
  background: #48ab92;
}
.thumb {
  width: 669px;
  height: 12px;
  margin-right: auto;
  background: var(--green);
  border: 2px solid;
  border-color: var(--green-hi) var(--green-lo) var(--green-lo) var(--green-hi);
}
.nav { margin-bottom: 4px; }
.tag { width: 40px; align-items: center; background: var(--orange); font-size: 12px; }
.w54 { width: 54px; }
.w30 { width: 30px; }
.w44 { width: 43px; }
.w126 { width: 126px; }
.nav .w30 { margin: 0 -1px; }
.btn.icon { width: 24px; display: flex; align-items: center; justify-content: center; }
.index { width: 122px; gap: 6px; margin-left: -1px; }
.unitsel { width: 86px; padding-left: 6px; }
.regsel { width: 113px; padding-left: 6px; }
.unitsel .sel, .regsel .sel { flex: 1; }
.merge { width: 359px; padding-left: 11px; justify-content: space-between; }
.merge .sel { width: 214px; }
.snug { padding: 1px 0; margin-left: -1px; }
.actions { display: grid; grid-template-columns: repeat(4, 1fr); }
```
